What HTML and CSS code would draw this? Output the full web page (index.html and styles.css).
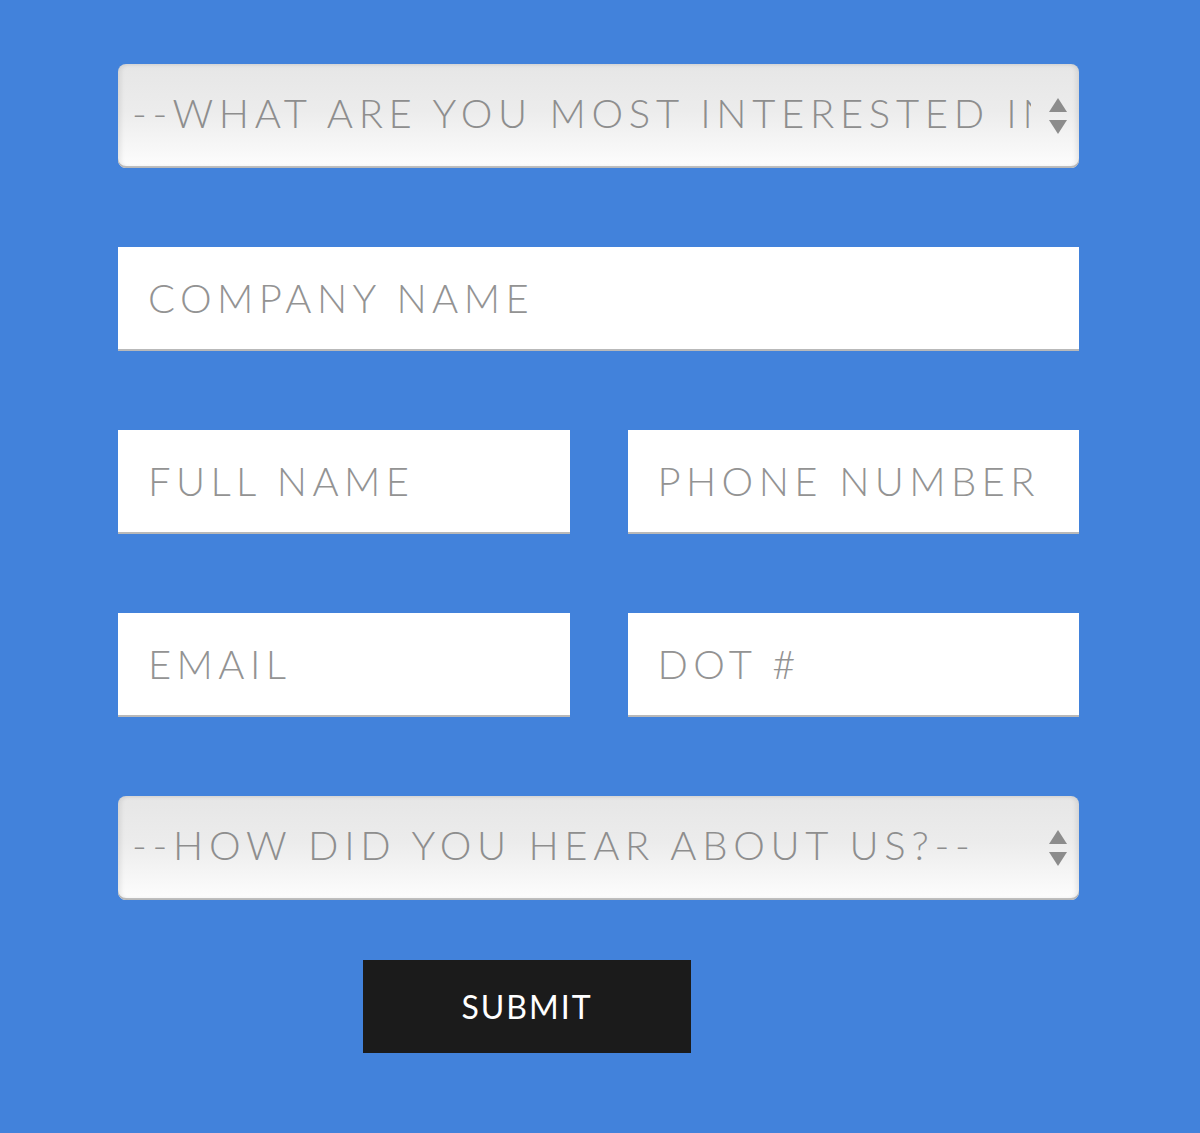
FILE: index.html
```html
<!DOCTYPE html>
<html lang="en">
<head>
  <meta charset="UTF-8">
  <meta name="viewport" content="width=device-width, initial-scale=1.0">
  <title>Contact</title>
  <link rel="stylesheet" href="styles.css">
</head>
<body>
  <form class="lead-form">
    <div class="row">
      <div class="select-wrap">
        <select class="field select">
          <option>--WHAT ARE YOU MOST INTERESTED IN?--</option>
        </select>
        <svg class="arrows" width="20" height="38" viewBox="0 0 20 38">
          <path d="M10 1 L19 15 L1 15 Z" fill="#8c8c8c"/>
          <path d="M1 23 L19 23 L10 37 Z" fill="#8c8c8c"/>
        </svg>
      </div>
    </div>

    <div class="row">
      <input class="field" type="text" placeholder="COMPANY NAME">
    </div>

    <div class="row two">
      <input class="field" type="text" placeholder="FULL NAME">
      <input class="field" type="text" placeholder="PHONE NUMBER">
    </div>

    <div class="row two">
      <input class="field" type="text" placeholder="EMAIL">
      <input class="field" type="text" placeholder="DOT #">
    </div>

    <div class="row">
      <div class="select-wrap">
        <select class="field select">
          <option>--HOW DID YOU HEAR ABOUT US?--</option>
        </select>
        <svg class="arrows" width="20" height="38" viewBox="0 0 20 38">
          <path d="M10 1 L19 15 L1 15 Z" fill="#8c8c8c"/>
          <path d="M1 23 L19 23 L10 37 Z" fill="#8c8c8c"/>
        </svg>
      </div>
    </div>

    <div class="actions">
      <button type="button" class="submit">SUBMIT</button>
    </div>
  </form>
</body>
</html>
```

FILE: styles.css
```css
body {
  margin: 0;
  min-height: 100vh;
  background: #4282db;
  font-family: 'Lato', 'Liberation Sans', sans-serif;
}

.lead-form {
  width: 961px;
  margin-left: 118px;
  padding-top: 64px;
  display: flex;
  flex-direction: column;
  gap: 79px;
}

.row {
  display: flex;
}

.row.two {
  gap: 58px;
}

.row.two .field {
  flex: 1;
  min-width: 0;
}

.field {
  box-sizing: border-box;
  width: 100%;
  height: 104px;
  margin: 0;
  padding: 0 30px;
  border: none;
  border-bottom: 2px solid #b9b9b9;
  background: #fff;
  color: #939393;
  font-family: inherit;
  font-size: 40px;
  font-weight: 300;
  letter-spacing: 5.4px;
  outline: none;
}

.field::placeholder {
  color: #939393;
}

.select-wrap {
  position: relative;
  width: 100%;
}

.select {
  -webkit-appearance: none;
  appearance: none;
  padding: 0 48px 6px 14px;
  border-radius: 8px;
  border-bottom: none;
  background: linear-gradient(#e6e6e6 0%, #ececec 45%, #fdfdfd 100%);
  box-shadow: inset 3px 0 4px rgba(0, 0, 0, 0.08), inset -3px 0 4px rgba(0, 0, 0, 0.08), inset 0 -2px 0 #c6c6c6;
  color: #8e8e8e;
  letter-spacing: 5.7px;
}

.arrows {
  position: absolute;
  right: 11px;
  top: 33px;
  pointer-events: none;
}

.actions {
  margin-top: -19px;
  padding-left: 245px;
}

.submit {
  width: 328px;
  height: 93px;
  border: none;
  background: #1b1b1b;
  color: #fff;
  font-family: inherit;
  font-size: 32px;
  letter-spacing: 2px;
  cursor: pointer;
}
```
